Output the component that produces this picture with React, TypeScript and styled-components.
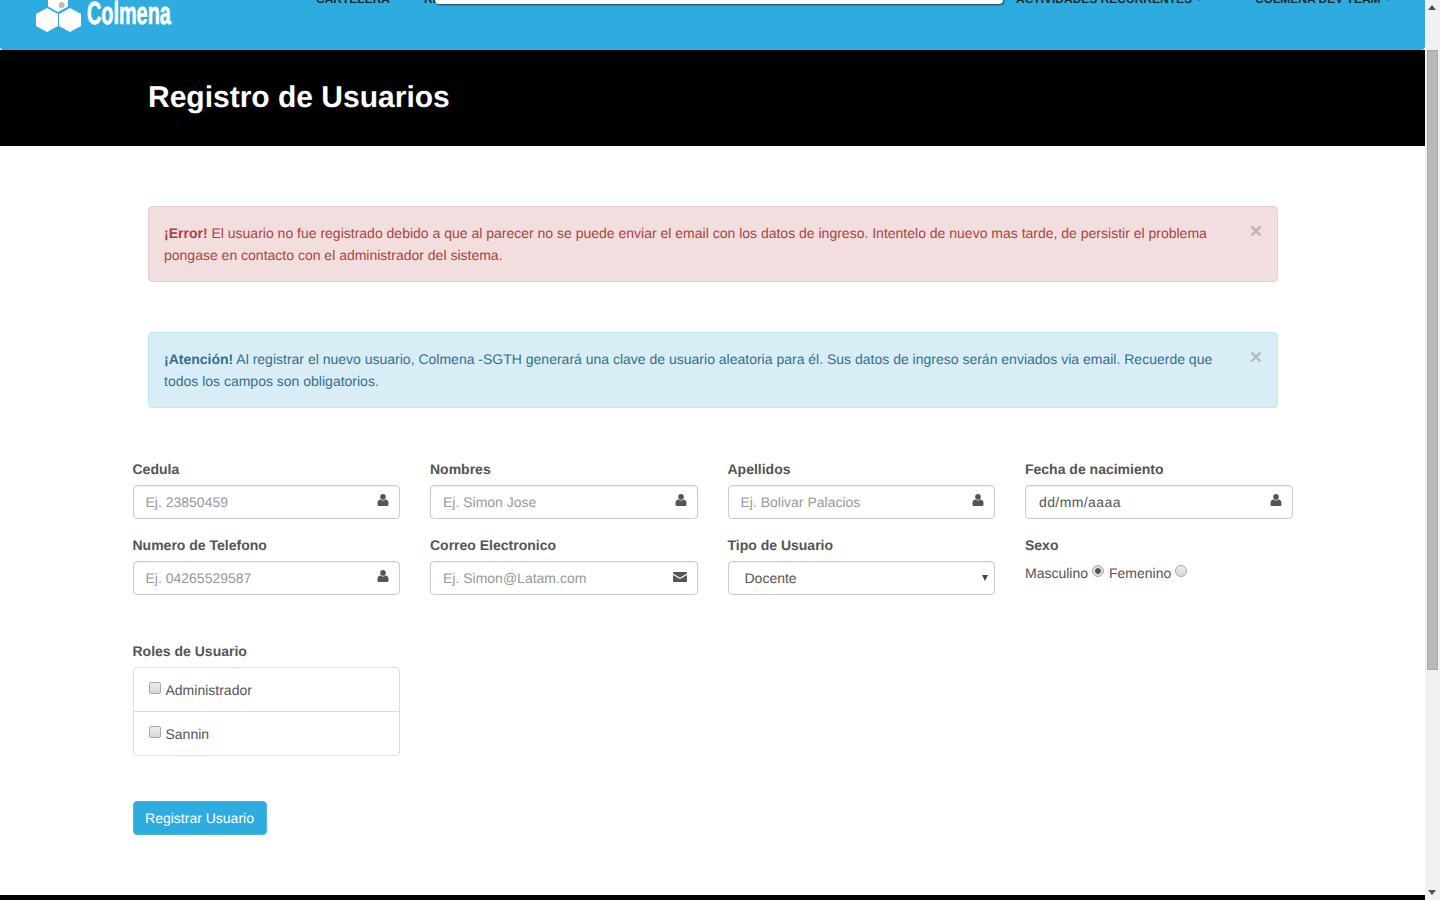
import React from 'react';
import styled, { createGlobalStyle } from 'styled-components';

const GlobalStyle = createGlobalStyle`
  html, body {
    margin: 0;
    height: 900px;
    overflow: hidden;
    background: #fff;
  }
  * {
    box-sizing: border-box;
  }
  body {
    font-family: 'Liberation Sans', Arial, sans-serif;
    font-size: 14px;
    line-height: 20px;
    color: #555;
    text-rendering: geometricPrecision;
  }
`;

const UserIcon = () => (
  <svg width="12" height="12" viewBox="0 0 12 12" fill="#555" style={{ display: 'block' }}>
    <circle cx="6" cy="2.900" r="2.800" />
    <path d="M0.500 10.500V8.800C0.500 7 1.800 5.700 3.500 5.500C4.200 6.100 5 6.400 6 6.400S7.800 6.100 8.500 5.500C10.200 5.700 11.500 7 11.500 8.800V10.500C11.500 11.400 10.900 12 10 12H2C1.100 12 0.500 11.400 0.500 10.500Z" />
  </svg>
);

const MailIcon = () => (
  <svg width="14" height="10" viewBox="0 0 14 10" fill="#555" style={{ display: 'block' }}>
    <path d="M0 1.100C0 .5.500 0 1.100 0H12.900C13.500 0 14 .5 14 1.100V1.600L7 5.700 0 1.600Z" />
    <path d="M0 3L7 7.100 14 3V8.900C14 9.500 13.500 10 12.900 10H1.100C.500 10 0 9.500 0 8.900Z" />
  </svg>
);

const Logo = () => (
  <svg width="48" height="34" viewBox="0 0 48 34" style={{ display: 'block', flex: 'none' }}>
    <polygon points="25,12 35,6.500 35,-4 25,-10 15,-4 15,6.500" fill="#fff" />
    <circle cx="28.700" cy="5" r="3" fill="#bbb" />
    <polygon points="14,8 25,14 25,26 14,32 3,26 3,14" fill="#fff" />
    <polygon points="37,8 48,14 48,26 37,32 26,26 26,14" fill="#fff" />
  </svg>
);

const Page = styled.div`
  display: flex;
  width: 1440px;
  height: 900px;
`;

const Main = styled.main`
  display: flex;
  flex-direction: column;
  width: 1425px;
  height: 900px;
  overflow: hidden;
`;

const Header = styled.header`
  position: relative;
  flex: 0 0 50px;
  display: flex;
  align-items: flex-start;
  padding-left: 33px;
  background: #2eacdf;
  border-radius: 0 0 4px 4px;
  overflow: hidden;
`;

const Brand = styled.div`
  display: flex;
  align-items: flex-start;
  height: 34px;
  gap: 6px;
`;

const BrandName = styled.span`
  display: inline-block;
  margin-top: -7px;
  font-size: 32px;
  line-height: 40px;
  font-weight: 700;
  color: #fff;
  -webkit-text-stroke: 0.700px #fff;
  transform: scaleX(0.62);
  transform-origin: left center;
`;

const NavLink = styled.span<{ $left: number }>`
  position: absolute;
  top: -10px;
  left: ${p => p.$left}px;
  font-size: 12px;
  line-height: 18px;
  font-weight: 700;
  color: #1c2b33;
  white-space: nowrap;
`;

const Caret = styled.span`
  display: inline-block;
  margin-left: 4px;
  vertical-align: 2px;
  width: 0;
  height: 0;
  border-left: 3px solid transparent;
  border-right: 3px solid transparent;
  border-top: 4px solid #1c2b33;
`;

const SearchOverlay = styled.div`
  position: absolute;
  top: -20px;
  left: 435px;
  width: 568px;
  height: 24px;
  background: #fff;
  border-radius: 4px;
  box-shadow: 1px 1px 2px rgba(0, 0, 0, 0.6);
`;

const TitleBand = styled.div`
  flex: 0 0 96px;
  display: flex;
  align-items: flex-start;
  padding: 31px 0 0 148px;
  background: #000;
`;

const Title = styled.h1`
  margin: 0;
  font-size: 30px;
  line-height: 33px;
  font-weight: 700;
  color: #fff;
`;

const Content = styled.div`
  flex: 1;
  display: flex;
  flex-direction: column;
  padding-top: 60px;
`;

const Alerts = styled.div`
  display: flex;
  flex-direction: column;
  gap: 50px;
  padding-left: 148px;
`;

const Alert = styled.div<{ $kind: 'danger' | 'info' }>`
  position: relative;
  width: 1130px;
  height: 76px;
  padding: 15px 50px 15px 15px;
  font-size: 14px;
  line-height: 22px;
  border-radius: 4px;
  border: 1px solid ${p => (p.$kind === 'danger' ? '#ebccd1' : '#bce8f1')};
  background: ${p => (p.$kind === 'danger' ? '#f2dede' : '#d9edf7')};
  color: ${p => (p.$kind === 'danger' ? '#a94442' : '#31708f')};
`;

const Close = styled.span`
  position: absolute;
  top: 14px;
  right: 15px;
  font-size: 21px;
  line-height: 21px;
  font-weight: 700;
  color: #000;
  opacity: 0.2;
`;

const FormGrid = styled.div`
  display: grid;
  grid-template-columns: repeat(4, 267.500px);
  column-gap: 30px;
  row-gap: 16px;
  margin-top: 51px;
  padding-left: 132.500px;
`;

const Field = styled.div`
  display: flex;
  flex-direction: column;
`;

const Label = styled.label`
  font-size: 14px;
  line-height: 20px;
  font-weight: 700;
  color: #555;
  margin-bottom: 6px;
`;

const InputBox = styled.div`
  position: relative;
  display: flex;
  align-items: center;
  height: 34px;
  padding: 0 12px;
  background: #fff;
  border: 1px solid #ccc;
  border-radius: 4px;
  box-shadow: inset 0 1px 1px rgba(0, 0, 0, 0.075);
`;

const InputText = styled.span<{ $filled?: boolean }>`
  color: ${p => (p.$filled ? '#555' : '#999')};
  padding-left: ${p => (p.$filled ? '1px' : '0')};
  letter-spacing: ${p => (p.$filled ? '0.400px' : '0')};
`;

const InputIcon = styled.span<{ $top: number; $right: number }>`
  position: absolute;
  top: ${p => p.$top}px;
  right: ${p => p.$right}px;
  display: flex;
`;

const SelectText = styled.span`
  color: #555;
  padding-left: 4px;
`;

const SelectArrow = styled.span`
  position: absolute;
  top: 13px;
  right: 6px;
  width: 0;
  height: 0;
  border-left: 3px solid transparent;
  border-right: 3px solid transparent;
  border-top: 6px solid #444;
`;

const RadioRow = styled.div`
  display: flex;
  align-items: center;
  height: 22px;
  margin-top: 1px;
`;

const Radio = styled.span<{ $checked?: boolean }>`
  position: relative;
  top: -2px;
  width: 12px;
  height: 12px;
  margin: 0 5px 0 4px;
  border-radius: 50%;
  border: 1px solid #a9a9a9;
  background: ${p =>
    p.$checked
      ? 'radial-gradient(circle, #555 0 2.500px, #ddd 3.200px)'
      : 'linear-gradient(#eee, #d8d8d8)'};
`;

const RolesBlock = styled.div`
  width: 267.500px;
  margin: 46px 0 0 132.500px;
`;

const RolesList = styled.div`
  display: flex;
  flex-direction: column;
  margin-top: 6px;
  border: 1px solid #ddd;
  border-radius: 4px;
`;

const RoleRow = styled.div`
  display: flex;
  align-items: center;
  height: 43px;
  padding-left: 15px;
  gap: 5px;

  & + & {
    height: 44px;
    border-top: 1px solid #ddd;
  }
`;

const Checkbox = styled.span`
  position: relative;
  top: -2px;
  width: 12px;
  height: 12px;
  border-radius: 2px;
  border: 1px solid #a9a9a9;
  background: linear-gradient(#eee, #d8d8d8);
`;

const SubmitButton = styled.button`
  display: block;
  width: 134px;
  height: 34px;
  margin: 45px 0 0 132.500px;
  padding: 0;
  font-family: inherit;
  font-size: 14px;
  line-height: 20px;
  text-rendering: inherit;
  color: #fff;
  background: #2eacdf;
  border: 1px solid #46b8da;
  border-radius: 4px;
`;

const FooterStrip = styled.div`
  margin-top: auto;
  flex: 0 0 5px;
  background: #000;
`;

const Scrollbar = styled.div`
  position: relative;
  flex: 0 0 15px;
  height: 900px;
  background: #f1f1f1;
`;

const ScrollArrow = styled.span<{ $up?: boolean }>`
  position: absolute;
  left: 3px;
  ${p => (p.$up ? 'top: 5px;' : 'bottom: 5px;')}
  width: 0;
  height: 0;
  border-left: 4px solid transparent;
  border-right: 4px solid transparent;
  ${p => (p.$up ? 'border-bottom: 5px solid #505050;' : 'border-top: 5px solid #505050;')}
`;

const ScrollThumb = styled.div`
  position: absolute;
  top: 50px;
  left: 2px;
  width: 11px;
  height: 620px;
  background: #b9b9b9;
  border: 1px solid #a8a8a8;
`;

const fields = [
  { label: 'Cedula', text: 'Ej. 23850459' },
  { label: 'Nombres', text: 'Ej. Simon Jose' },
  { label: 'Apellidos', text: 'Ej. Bolivar Palacios' },
  { label: 'Fecha de nacimiento', text: 'dd/mm/aaaa', filled: true },
  { label: 'Numero de Telefono', text: 'Ej. 04265529587' },
  { label: 'Correo Electronico', text: 'Ej. Simon@Latam.com', mail: true },
];

export default function App() {
  return (
    <Page>
      <GlobalStyle />
      <Main>
        <Header>
          <Brand>
            <Logo />
            <BrandName>Colmena</BrandName>
          </Brand>
          <NavLink $left={316}>CARTELERA</NavLink>
          <NavLink $left={424}>REPORTES</NavLink>
          <SearchOverlay />
          <NavLink $left={1016}>ACTIVIDADES RECURRENTES<Caret /></NavLink>
          <NavLink $left={1255}>COLMENA DEV TEAM<Caret /></NavLink>
        </Header>
        <TitleBand>
          <Title>Registro de Usuarios</Title>
        </TitleBand>
        <Content>
          <Alerts>
            <Alert $kind="danger">
              <strong>¡Error!</strong> El usuario no fue registrado debido a que al parecer no se puede enviar el email con los datos de ingreso. Intentelo de nuevo mas tarde, de persistir el problema pongase en contacto con el administrador del sistema.
              <Close>×</Close>
            </Alert>
            <Alert $kind="info">
              <strong>¡Atención!</strong> Al registrar el nuevo usuario, Colmena -SGTH generará una clave de usuario aleatoria para él. Sus datos de ingreso serán enviados via email. Recuerde que todos los campos son obligatorios.
              <Close>×</Close>
            </Alert>
          </Alerts>
          <FormGrid>
            {fields.map(field => (
              <Field key={field.label}>
                <Label>{field.label}</Label>
                <InputBox>
                  <InputText $filled={field.filled}>{field.text}</InputText>
                  {field.mail ? (
                    <InputIcon $top={10} $right={10}><MailIcon /></InputIcon>
                  ) : (
                    <InputIcon $top={8} $right={10}><UserIcon /></InputIcon>
                  )}
                </InputBox>
              </Field>
            ))}
            <Field>
              <Label>Tipo de Usuario</Label>
              <InputBox>
                <SelectText>Docente</SelectText>
                <SelectArrow />
              </InputBox>
            </Field>
            <Field>
              <Label>Sexo</Label>
              <RadioRow>
                Masculino
                <Radio $checked />
                Femenino
                <Radio />
              </RadioRow>
            </Field>
          </FormGrid>
          <RolesBlock>
            <Label as="div">Roles de Usuario</Label>
            <RolesList>
              <RoleRow>
                <Checkbox />
                Administrador
              </RoleRow>
              <RoleRow>
                <Checkbox />
                Sannin
              </RoleRow>
            </RolesList>
          </RolesBlock>
          <SubmitButton>Registrar Usuario</SubmitButton>
          <FooterStrip />
        </Content>
      </Main>
      <Scrollbar>
        <ScrollArrow $up />
        <ScrollThumb />
        <ScrollArrow />
      </Scrollbar>
    </Page>
  );
}
